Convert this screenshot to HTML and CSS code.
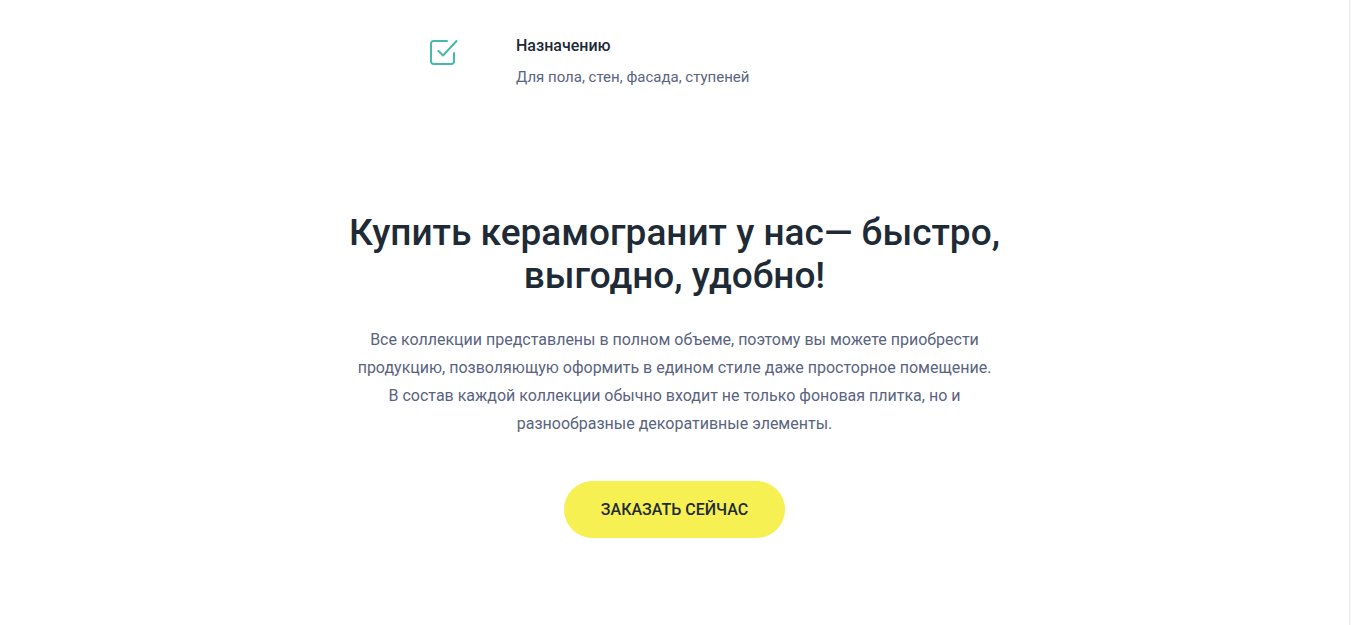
FILE: index.html
```
<!DOCTYPE html>
<html lang="ru">
<head>
    <meta charset="UTF-8">
    <meta name="viewport" content="width=device-width, initial-scale=1.0">
    <title>Керамогранит</title>
    <link rel="stylesheet" href="styles.css">
</head>
<body>
    <section class="features">
        <div class="feature">
            <svg class="feature-icon" viewBox="0 0 30 30" aria-hidden="true">
                <path d="M19 3H5.500a2.500 2.500 0 0 0-2.500 2.500v18a2.500 2.500 0 0 0 2.500 2.500h18a2.500 2.500 0 0 0 2.500-2.500V15"/>
                <path d="M10.500 13l4.500 4.500L28.500 3"/>
            </svg>
            <div class="feature-text">
                <h3>Назначению</h3>
                <p>Для пола, стен, фасада, ступеней</p>
            </div>
        </div>
    </section>

    <section class="order">
        <h2>Купить керамогранит у нас— быстро, выгодно, удобно!</h2>
        <p>Все коллекции представлены в полном объеме, поэтому вы можете приобрести продукцию, позволяющую оформить в едином стиле даже просторное помещение. В состав каждой коллекции обычно входит не только фоновая плитка, но и разнообразные декоративные элементы.</p>
        <button class="btn" type="button">ЗАКАЗАТЬ СЕЙЧАС</button>
    </section>
</body>
</html>
```

FILE: styles.css
```
* {
    margin: 0;
    padding: 0;
    box-sizing: border-box;
}

body {
    font-family: Roboto, sans-serif;
    background: #fff;
    color: #1e2b37;
    min-height: 100vh;
    border-right: 2px solid #f1f1f1;
}

.features {
    max-width: 493px;
    margin: 0 auto;
    padding-top: 32px;
}

.feature {
    display: flex;
    gap: 58px;
}

.feature-icon {
    width: 30px;
    height: 30px;
    margin-top: 6px;
    fill: none;
    stroke: #46baaa;
    stroke-width: 2;
    stroke-linecap: round;
    stroke-linejoin: round;
}

.feature h3 {
    font-size: 16px;
    line-height: 28px;
    font-weight: 500;
    margin-bottom: 4px;
}

.feature p {
    font-size: 15px;
    line-height: 26px;
    color: #5a6480;
}

.order {
    max-width: 660px;
    margin: 0 auto;
    padding-top: 121px;
    text-align: center;
}

.order h2 {
    font-size: 37px;
    line-height: 43px;
    font-weight: 500;
    margin-bottom: 29px;
}

.order p {
    max-width: 640px;
    margin: 0 auto 43px;
    font-size: 16px;
    line-height: 28px;
    color: #5a6480;
}

.btn {
    background: #f7f052;
    color: #1e2b37;
    border: none;
    border-radius: 29px;
    padding: 0 37px;
    height: 57px;
    font-family: inherit;
    font-size: 16px;
    font-weight: 500;
    cursor: pointer;
}
```
